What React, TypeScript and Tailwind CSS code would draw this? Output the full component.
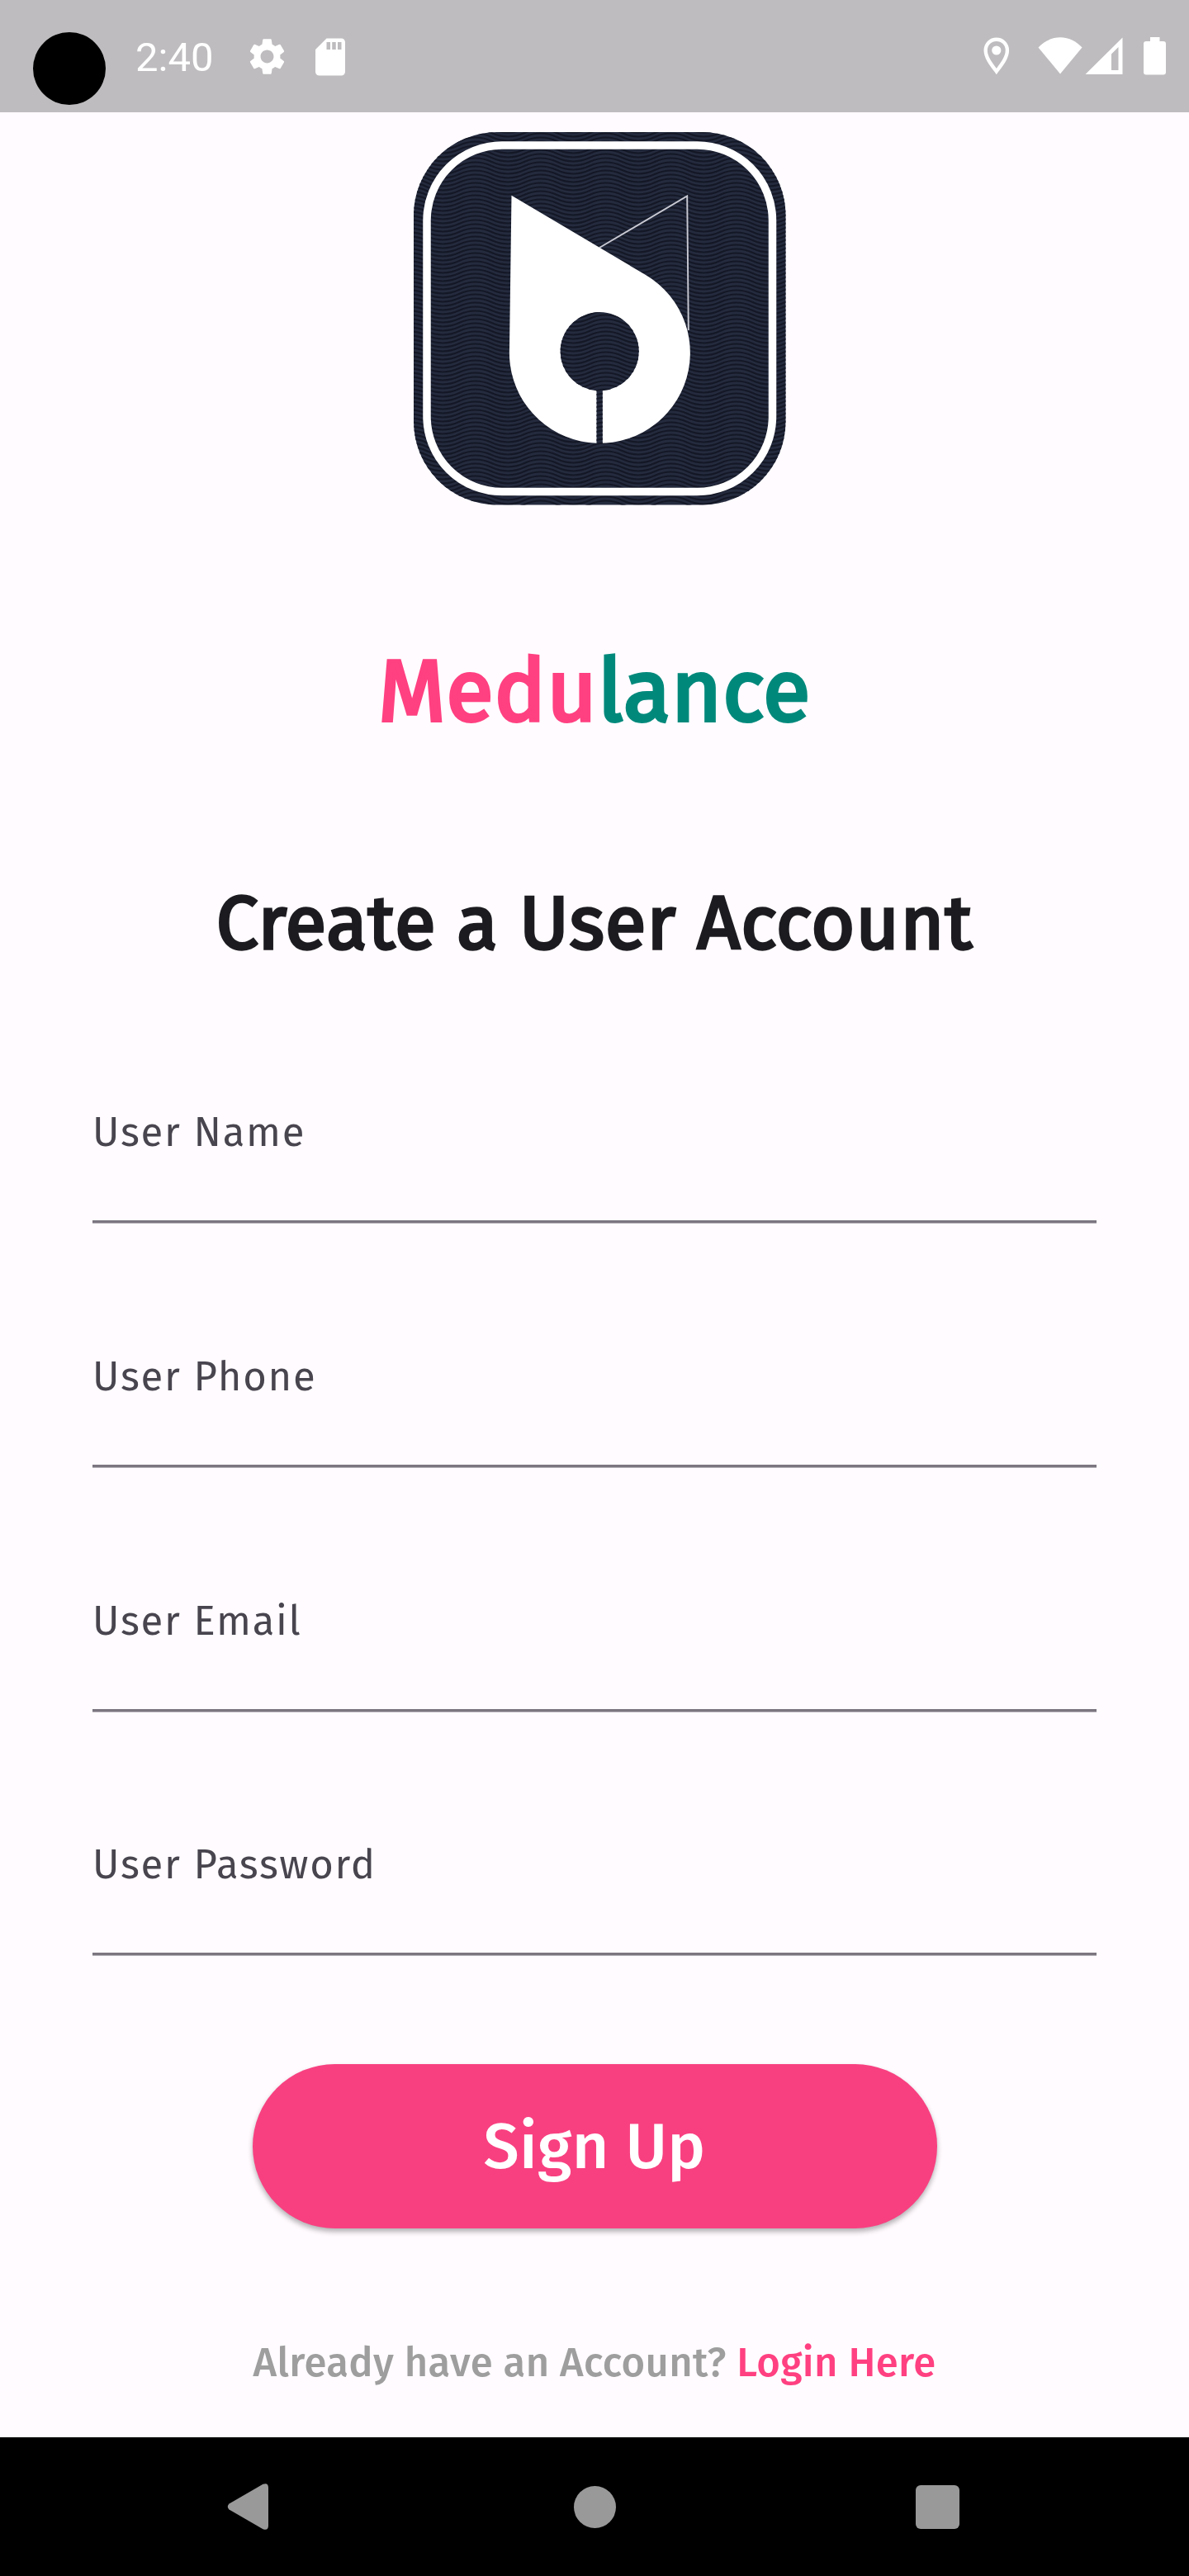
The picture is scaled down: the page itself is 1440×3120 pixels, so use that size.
import React from "react";
import { MdSettings, MdSdCard } from "react-icons/md";

const FIELDS = ["User Name", "User Phone", "User Email", "User Password"];

const wavePath = (y: number) => {
  let d = `M-24 ${y}`;
  for (let i = 0; i < 7; i++) d += " q19.75 -9 39.5 0 t39.5 0";
  return d;
};
const WAVES = Array.from({ length: 92 }, (_, i) => wavePath(i * 5 - 4));

function StatusBar() {
  return (
    <header className="flex h-[136px] shrink-0 items-start bg-[#bebcbe] text-white">
      <div className="mt-[39px] ml-[40px] size-[88px] rounded-full bg-black" />
      <span className="mt-[41px] ml-[36px] w-[97px] font-['Roboto',sans-serif] text-[49px] leading-[57px]">2:40</span>
      <MdSettings className="mt-[42px] ml-[36px] size-[53px]" />
      <MdSdCard className="mt-[42px] ml-[23px] size-[54px]" />
      <svg className="mt-[45px] ml-auto h-[46px] w-[32px]" viewBox="0 0 32 46" fill="none">
        <path
          d="M15.800 41.500C9 32.500 2.700 24.500 2.700 16C2.700 8.500 8.500 2.700 15.800 2.700S28.900 8.500 28.900 16C28.900 24.500 22.600 32.500 15.800 41.500Z"
          stroke="currentColor"
          strokeWidth="4.400"
        />
        <circle cx="15.800" cy="16" r="5.600" fill="currentColor" />
      </svg>
      <svg className="mt-[44px] ml-[34px] h-[48px] w-[156px]" viewBox="0 0 156 48" fill="currentColor">
        <path d="M0.500 13.500C7 6.500 16 1.200 27 1.200S47 6.500 53.500 13.500L27 45.500Z" />
        <path fillRule="evenodd" d="M57.500 46L102.500 1.500V46ZM89 21.500V41H97.500V13Z" />
        <path d="M136 1h11.500v5H152q3 0 3 3V43.500q0 3-3 3H131q-3 0-3-3V9q0-3 3-3h5Z" />
      </svg>
      <div className="w-[27px]" />
    </header>
  );
}

function Logo() {
  return (
    <svg className="h-[452px] w-[451px]" viewBox="0 0 451 452" fill="none">
      <defs>
        <clipPath id="tile">
          <rect width="450.500" height="451.500" rx="101" />
        </clipPath>
        <clipPath id="eye">
          <circle cx="225.200" cy="265.700" r="47.600" />
          <rect x="221.500" y="308" width="7.300" height="70" />
        </clipPath>
        <g id="waves">
          <rect width="451" height="452" fill="#252b3e" />
          {WAVES.map((d, i) => (
            <path key={i} d={d} stroke="#141826" strokeWidth="2.200" />
          ))}
        </g>
      </defs>
      <use href="#waves" clipPath="url(#tile)" />
      <rect x="16" y="16" width="418.500" height="419.500" rx="91" stroke="#fff" strokeWidth="9.500" />
      <path d="M225 140L331.200 77.500L332.800 240" stroke="#c9cad3" strokeWidth="1.900" />
      <path d="M118.500 76.700L281 173A109.500 109.500 0 1 1 116 262Z" fill="#fff" />
      <use href="#waves" clipPath="url(#eye)" />
    </svg>
  );
}

function Field({ label }: { label: string }) {
  return (
    <label className="block h-[295.75px]">
      <span className="block h-[136px] text-[49px] leading-[59px] tracking-[1.75px] text-[#49454f]">{label}</span>
      <span className="block h-[4px] border-b border-[#b5b1b8] bg-[#7b7680]" />
    </label>
  );
}

function NavBar() {
  return (
    <nav className="flex h-[168px] shrink-0 items-center bg-black text-[#999]">
      <svg className="ml-[275px] h-[56px] w-[50px]" viewBox="0 0 50 56" fill="currentColor">
        <path d="M2.500 24.500L43.500 0.800Q50 -1.500 50 5V51Q50 57.500 43.500 55.200L2.500 31.500Q-1 28 2.500 24.500Z" />
      </svg>
      <div className="ml-[369.500px] size-[51px] rounded-full bg-[#999]" />
      <div className="ml-[363px] size-[53px] rounded-[6px] bg-[#999]" />
    </nav>
  );
}

export default function App() {
  return (
    <div className="flex h-[3120px] w-[1440px] flex-col overflow-hidden bg-[#fffbff] font-['Fira_Sans','Noto_Sans',sans-serif]">
      <StatusBar />
      <main className="flex flex-1 flex-col items-center">
        <div className="mt-[24px] ml-[13px]">
          <Logo />
        </div>
        <h1 className="mt-[163px] h-[126px] text-[105px] leading-[126px] font-normal tracking-[0.8px] whitespace-nowrap">
          <span className="text-[#ff4081] [-webkit-text-stroke:4px_#ff4081]">Medu</span>
          <span className="text-[#00897b] [-webkit-text-stroke:4px_#00897b]">lance</span>
        </h1>
        <h2 className="mt-[163px] h-[109px] text-[91px] leading-[109px] font-normal tracking-[0.875px] whitespace-nowrap text-[#1c1b1f] [-webkit-text-stroke:3.4px_#1c1b1f]">
          Create a User Account
        </h2>
        <form className="mt-[169px] w-[1216px]">
          {FIELDS.map((f) => (
            <Field key={f} label={f} />
          ))}
        </form>
        <button className="-mt-[25px] flex h-[199px] w-[829px] shrink-0 items-center justify-center rounded-full bg-[#f84080] text-[77px] leading-[92px] font-medium tracking-[0.35px] text-white shadow-[0_4px_6px_rgba(0,0,0,0.3)]">
          Sign Up
        </button>
        <p className="mt-[133px] text-[49px] leading-[59px] font-medium tracking-[0.35px] whitespace-nowrap text-[#9e9e9e]">
          Already have an Account? <a className="text-[#ff4081]">Login Here</a>
        </p>
      </main>
      <NavBar />
    </div>
  );
}
